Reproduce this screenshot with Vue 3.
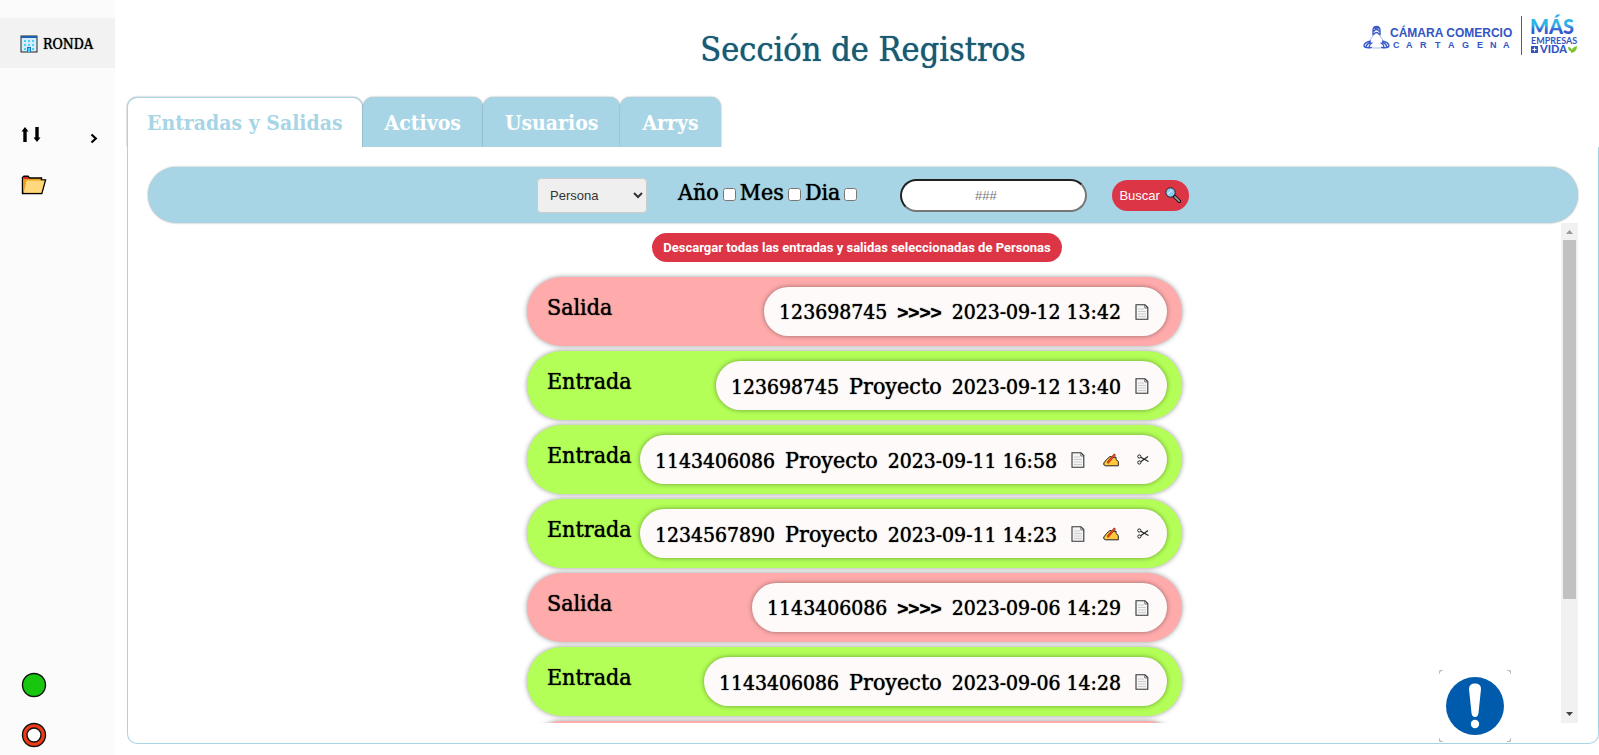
<script setup>
import { ref } from 'vue'

const tabs = ['Entradas y Salidas', 'Activos', 'Usuarios', 'Arrys']
const activeTab = ref(0)

const kind = ref('Persona')
const filters = ref([
  { id: 'anio', label: 'Año', checked: false },
  { id: 'mes', label: 'Mes', checked: false },
  { id: 'dia', label: 'Dia', checked: false },
])
const query = ref('')

const records = [
  { type: 'Salida', doc: '123698745', place: '>>>>', date: '2023-09-12 13:42', open: false },
  { type: 'Entrada', doc: '123698745', place: 'Proyecto', date: '2023-09-12 13:40', open: false },
  { type: 'Entrada', doc: '1143406086', place: 'Proyecto', date: '2023-09-11 16:58', open: true },
  { type: 'Entrada', doc: '1234567890', place: 'Proyecto', date: '2023-09-11 14:23', open: true },
  { type: 'Salida', doc: '1143406086', place: '>>>>', date: '2023-09-06 14:29', open: false },
  { type: 'Entrada', doc: '1143406086', place: 'Proyecto', date: '2023-09-06 14:28', open: false },
  { type: 'Salida', doc: '', place: '', date: '', open: false },
]
</script>

<template>
  <div class="layout">
    <nav class="sidebar">
      <a href="#" class="brand">
        <svg width="18" height="18" viewBox="0 0 18 18">
          <rect x="1" y="1" width="16" height="16" fill="#d3eefa" stroke="#222" />
          <path d="M1 1h16v2H1z" fill="#1b5fae" />
          <path d="M4 5h2v2H4zM8 5h2v2H8zM12 5h2v2h-2zM4 9h2v2H4zM8 9h2v2H8zM12 9h2v2h-2zM4 13h2v2H4zM12 13h2v2h-2z" fill="#45d4f5" />
          <path d="M7 17v-5h4v5z" fill="#1b74c9" /><path d="M8 13h2v4H8z" fill="#45d4f5" />
        </svg>
        <span>RONDA</span>
      </a>
      <a href="#" class="nav-item nav-split" aria-label="Entradas y salidas">
        <svg width="20" height="18" viewBox="0 0 20 18">
          <path d="M4 1 .5 5.500H2.300V16h3.400V5.500H7.500zM14.300 1h3.400v10.500H19.500L16 16l-3.500-4.500h1.800z" fill="#000" />
        </svg>
        <svg class="chevron" width="8" height="11" viewBox="0 0 8 11">
          <path d="M1.500 1.500 5.800 5.500 1.500 9.500" fill="none" stroke="#000" stroke-width="2.200" />
        </svg>
      </a>
      <a href="#" class="nav-item" aria-label="Archivos">
        <svg width="26" height="20" viewBox="0 0 26 20">
          <path d="M1.500 18.500V2.500L3 1.200H7L8.500 3H20.500V5H24.500L20.800 18.500z" fill="#e9a21a" stroke="#000" stroke-width="1.400" />
          <path d="M2.500 4V2.500L3.300 1.900H6.600L8 4z" fill="#e1252b" />
          <path d="M5.500 5.500H23.600L20.300 17.700H2.800z" fill="#ffd77c" />
          <path d="M2.200 5h3.300L2.200 17z" fill="#e9a21a" />
        </svg>
      </a>
      <a href="#" class="nav-item first-status" aria-label="Conectado">
        <svg width="26" height="26" viewBox="0 0 26 26"><circle cx="13" cy="13" r="11.500" fill="#18c60f" stroke="#111" stroke-width="1.400" /></svg>
      </a>
      <a href="#" class="nav-item" aria-label="Salir">
        <svg width="26" height="26" viewBox="0 0 26 26">
          <circle cx="13" cy="13" r="11.500" fill="#f03a17" stroke="#111" stroke-width="1.400" />
          <circle cx="13" cy="13" r="7" fill="#fff" stroke="#111" stroke-width="1.400" />
        </svg>
      </a>
    </nav>

    <main class="content">
      <header class="header">
        <h1>Sección de Registros</h1>
        <svg class="logo" width="220" height="44" viewBox="0 0 220 44" role="img" aria-label="Cámara Comercio Cartagena, Más Empresas + Vida">
          <defs>
            <linearGradient id="mas" x1="0" y1="0" x2="0" y2="1">
              <stop offset="0.450" stop-color="#2fb4e8" /><stop offset="0.700" stop-color="#3557cf" />
            </linearGradient>
          </defs>
          <g fill="none" stroke="#3a5bc7" stroke-width="1.400" stroke-linecap="round">
            <path d="M13 21v-4.500q0-4 3.500-4t3.500 4V21M14 17q2.500-3 5 0M14 20q2.500-3 5 0M15 14.500q1.500-1.500 3 0" />
            <path d="M10.500 27q-6.500 1.500-6.500 5 1 2.500 7.500 1.500M10.500 28.500q-3.500 1-4.300 4M12 29q-2.800 1.500-3 4" />
            <path d="M22.500 27q6.500 1.500 6.500 5-1 2.500-7.500 1.500M22.500 28.500q3.500 1 4.300 4M21 29q2.800 1.500 3 4" />
            <path d="M13 22 10 26M20 22l3 4M13 34h7" stroke="#a9bbec" stroke-width="1" />
          </g>
          <g fill="#3355c4" font-family="'Liberation Sans', Arial, sans-serif" font-weight="700">
            <text x="30" y="23" font-size="12">CÁMARA COMERCIO</text>
            <text x="33 46 60 75 88 102 117 130 143" y="34" font-size="9">CARTAGENA</text>
          </g>
          <path d="M161.500 2v39" stroke="#3a5bc7" />
          <g font-family="Lato, sans-serif" fill="#3355c4">
            <text x="170" y="20" font-size="20" font-weight="900" fill="url(#mas)">MÁS</text>
            <text x="171" y="30" font-size="9" font-weight="700">EMPRESAS</text>
            <text x="180" y="39" font-size="11" font-weight="900">VIDA</text>
          </g>
          <rect x="171" y="32" width="7" height="7" fill="#3355c4" />
          <path d="M174.500 33.500v4M172.500 35.500h4" stroke="#fff" />
          <path d="M208 33q4 0 4 5-4-1-4-5zM217 32q0 6-6 7 0-5.500 6-7z" fill="#7ac52c" />
        </svg>
      </header>

      <div class="tabs" role="tablist">
        <button
          v-for="(tab, i) in tabs" :key="tab" type="button" role="tab" class="tab"
          :class="{ active: i === activeTab }" :aria-selected="i === activeTab" @click="activeTab = i"
        >{{ tab }}</button>
      </div>

      <section class="panel">
        <form class="search" @submit.prevent>
          <select v-model="kind" class="kind" aria-label="Tipo de registro">
            <option>Persona</option>
          </select>
          <div class="checks">
            <label v-for="f in filters" :key="f.id" :for="f.id">{{ f.label }}<input :id="f.id" v-model="f.checked" type="checkbox"></label>
          </div>
          <input v-model="query" class="query" type="text" placeholder="###" aria-label="Documento">
          <button class="find" type="submit">
            Buscar
            <svg width="16" height="16" viewBox="0 0 16 16">
              <path d="M9 9l5.300 5.300" stroke="#111" stroke-width="3.600" stroke-linecap="round" />
              <path d="M10 10l4.200 4.200" stroke="#999" stroke-width="1.800" stroke-linecap="round" />
              <circle cx="5.500" cy="5.500" r="4.700" fill="#8ccbf5" stroke="#222" />
              <path d="M3 7 7 3" stroke="#c8e8fc" stroke-width="1.500" />
            </svg>
          </button>
        </form>

        <div class="scroll-area">
          <div class="scroller">
            <div class="download-bar">
              <button type="button" class="download">Descargar todas las entradas y salidas seleccionadas de Personas</button>
            </div>
            <ul class="records">
              <li v-for="(r, i) in records" :key="i" class="record" :class="r.type.toLowerCase()">
                <template v-if="r.doc">
                  <span class="type">{{ r.type }}</span>
                  <div class="pill">
                    <div class="data">
                      <span>{{ r.doc }}</span>
                      <span :class="r.type === 'Salida' ? 'arrows' : 'place'">{{ r.place }}</span>
                      <span>{{ r.date }}</span>
                    </div>
                    <div class="actions">
                      <button type="button" aria-label="Ver nota">
                        <svg width="14" height="16" viewBox="0 0 14 16">
                          <path d="M1 .8H10L12.800 3.500V15.200H1z" fill="#f5f5f5" stroke="#333" stroke-width="1.100" />
                          <path d="M9.800 1v3h3" fill="none" stroke="#555" stroke-width=".8" />
                          <path d="M3 5h6M3 7.500h8M3 10h8M3 12.500h8" stroke="#ccc" />
                        </svg>
                      </button>
                      <button v-if="r.open" type="button" aria-label="Editar">
                        <svg width="16" height="14" viewBox="0 0 16 14">
                          <path d="M.8 10 3.500 6.500 7 3.500 10.500 4.500 13 4 13 6.500 15.300 8.500V12.800H2.500L.8 11.800z" fill="#ffc83d" stroke="#222" />
                          <path d="M4.500 10 12 1.300" stroke="#7a2416" stroke-width="2.200" />
                          <path d="M4.500 10 11.800 1.600" stroke="#f04a24" stroke-width="1.400" />
                        </svg>
                      </button>
                      <button v-if="r.open" type="button" aria-label="Cortar">
                        <svg width="12" height="12" viewBox="0 0 12 12" fill="none" stroke="#222">
                          <circle cx="2.300" cy="2.500" r="1.600" /><circle cx="2.300" cy="8.500" r="1.600" />
                          <path d="M3.700 3.300 11.500 7.500M3.700 7.800 11 2.500" stroke-width="1.200" />
                        </svg>
                      </button>
                    </div>
                  </div>
                </template>
              </li>
            </ul>
          </div>
          <div class="scrollbar" aria-hidden="true">
            <svg width="17" height="17" viewBox="0 0 17 17"><path d="M5 11 8.500 7 12 11z" fill="#999" /></svg>
            <div class="track"><div class="thumb"></div></div>
            <svg width="17" height="17" viewBox="0 0 17 17"><path d="M5 6h7L8.500 10z" fill="#444" /></svg>
          </div>
        </div>
      </section>
    </main>

    <button type="button" class="help" aria-label="Ayuda">
      <svg width="72" height="72" viewBox="0 0 72 72">
        <path d="M0 4Q0 0 4 0M68 0q4 0 4 4M72 68q0 4-4 4M4 72q-4 0-4-4" fill="none" stroke="#bbb" stroke-width="1.500" />
        <circle cx="36" cy="36" r="29" fill="#005bac" />
        <path d="M30 19q0-5.500 6-5.500T42 19L39.500 43q-.5 4-3.500 4t-3.500-4z" fill="#fff" />
        <circle cx="36" cy="54" r="4.200" fill="#fff" />
      </svg>
    </button>
  </div>
</template>

<style>
body { background: #fff; }
</style>

<style scoped>
.layout {
  --slab: "Roboto Slab", "DejaVu Serif Condensed", "DejaVu Serif", serif;
  --sans: "Liberation Sans", Arial, sans-serif;
  --sky: #a8d5e5;
  --medium: 0 0 1px currentColor;
  display: flex;
  height: 100vh;
  overflow: hidden;
  font-family: var(--slab);
  color: #000;
}
* { box-sizing: border-box; }
svg { display: block; flex: none; }
button { cursor: pointer; }

.sidebar {
  flex: 0 0 115px;
  display: flex;
  flex-direction: column;
  padding-top: 18px;
  background: #fbfbfb;
}
.brand, .nav-item {
  display: flex;
  align-items: center;
  flex: 0 0 50px;
  padding: 0 21px;
  color: #000;
  text-decoration: none;
}
.brand {
  gap: 5px;
  margin-bottom: 42px;
  padding: 2px 20px 0;
  background: #f2f2f2;
  font-size: 14px;
  text-shadow: var(--medium);
}
.nav-split { justify-content: space-between; padding-right: 17px; }
.chevron { margin-top: 6px; }
.first-status { margin-top: auto; }
.nav-item:last-child { margin-bottom: -5px; }

.content {
  flex: 1;
  min-width: 0;
  display: flex;
  flex-direction: column;
  padding: 0 0 11px 12px;
}
.header {
  position: relative;
  flex: 0 0 97px;
  display: flex;
  justify-content: center;
  align-items: center;
}
h1 { margin: 0; color: #1a5a73; font-size: 34px; font-weight: 400; text-shadow: var(--medium); }
.logo { position: absolute; top: 14px; right: 19px; overflow: visible; }

.tabs { display: flex; }
.tab {
  height: 50px;
  padding: 0 22px;
  border: 0;
  border-radius: 10px 10px 0 0;
  background: var(--sky);
  box-shadow: 0 0 2px rgba(0, 0, 0, .4);
  clip-path: inset(-2px -2px 0 -1px);
  color: #fff;
  font: 700 21px var(--slab);
}
.tab.active { border: 1px solid var(--sky); border-bottom: 0; background: #fff; color: var(--sky); padding: 0 19px; }

.panel {
  flex: 1;
  min-height: 0;
  display: flex;
  flex-direction: column;
  padding: 20px;
  border: 1px solid var(--sky);
  border-top: 0;
  border-radius: 0 0 10px 10px;
}
.search {
  flex: 0 0 56px;
  display: flex;
  justify-content: center;
  align-items: center;
  border-radius: 28px;
  background: var(--sky);
  box-shadow: 0 0 2px rgba(0, 0, 0, .4);
}
.kind {
  width: 110px;
  height: 35px;
  padding: 0 8px;
  border: 1px solid #ccc;
  border-radius: 4px;
  background: #efefef;
  color: #333;
  font: 13px var(--sans);
}
.checks { display: flex; margin: 0 39px 6px 31px; font-size: 23px; text-shadow: var(--medium); }
.checks label { display: flex; align-items: center; }
.checks input { width: 13px; height: 13px; margin: 4px 4px 0; }
.query {
  width: 187px;
  height: 33px;
  padding: 0 16px 0 0;
  border: 2px inset #767676;
  border-radius: 17px;
  background: #fff;
  font: 13px var(--sans);
  text-align: center;
}
.find {
  display: flex;
  align-items: center;
  gap: 5px;
  height: 31px;
  margin-left: 25px;
  padding: 0 8px 0 7px;
  border: 0;
  border-radius: 16px;
  background: #dc3545;
  color: #fff;
  font: 13px var(--sans);
}

.scroll-area { flex: 1; min-height: 0; display: flex; }
.scroller { flex: 1; min-width: 0; overflow-y: auto; scrollbar-width: none; }
.scrollbar { flex: 0 0 17px; display: flex; flex-direction: column; background: #f1f1f1; }
.track { flex: 1; padding: 0 2px; }
.thumb { height: 77%; background: #c1c1c1; }

.download-bar { display: flex; justify-content: center; padding: 10px 0 15px 5px; }
.download {
  height: 29px;
  padding: 0 11px;
  border: 0;
  border-radius: 15px;
  background: #dc3545;
  color: #fff;
  font: 700 13px Roboto, var(--sans);
}
.records {
  display: flex;
  flex-direction: column;
  gap: 5px;
  max-width: 655px;
  margin: 0 auto;
  padding: 0 0 4px;
  list-style: none;
}
.record {
  display: flex;
  justify-content: space-between;
  height: 69px;
  padding: 10px 15px 10px 20px;
  border-radius: 35px;
  box-shadow: 0 0 5px rgba(0, 0, 0, .4);
  white-space: nowrap;
  text-shadow: var(--medium);
}
.salida { background: #ffabab; }
.entrada { background: #b3ff57; }
.type { font-size: 23px; line-height: 40px; }
.pill {
  display: flex;
  align-items: center;
  gap: 14px;
  padding: 0 18px 0 15px;
  border-radius: 25px;
  background: #fffafa;
  box-shadow: 0 0 5px rgba(0, 0, 0, .4);
}
.data { display: flex; align-items: baseline; gap: 10px; font-size: 21px; }
.place { font-size: 23px; }
.arrows { font: 700 19px var(--sans); }
.actions { display: flex; align-items: center; gap: 18px; }
.actions button { padding: 0; border: 0; background: none; }

.help {
  position: absolute;
  right: 88px;
  bottom: 13px;
  padding: 0;
  border: 0;
  background: #fff;
}
</style>
